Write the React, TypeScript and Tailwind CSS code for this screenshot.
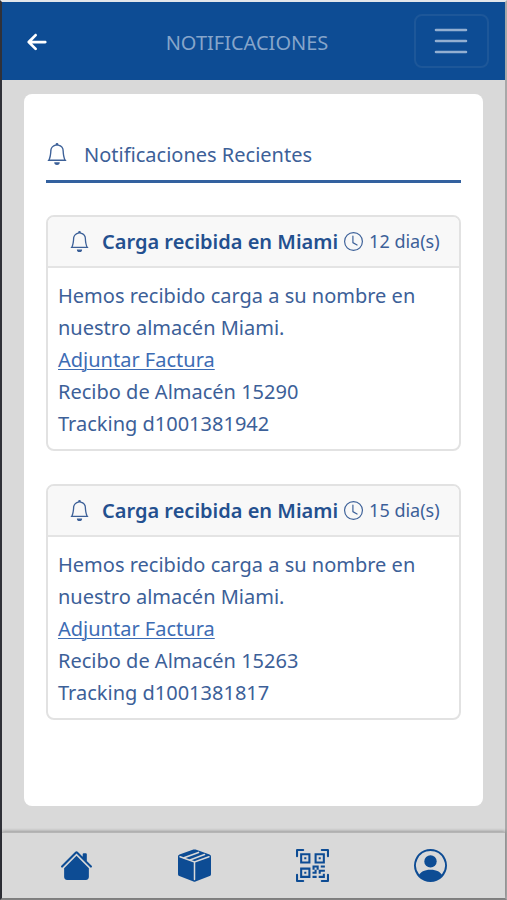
import { BsBell, BsClock, BsHouseFill, BsPersonCircle, BsQrCodeScan } from "react-icons/bs";
import { FaArrowLeft } from "react-icons/fa6";

type Notice = { id: string; age: string; receipt: string; tracking: string };

const notices: Notice[] = [
  { id: "n1", age: "12 dia(s)", receipt: "15290", tracking: "d1001381942" },
  { id: "n2", age: "15 dia(s)", receipt: "15263", tracking: "d1001381817" },
];

// Closed parcel with two bands of tape across the lid
function BoxIcon({ size }: { size: number }) {
  return (
    <svg width={size} height={size} viewBox="0 0 33 33" fill="none">
      <path
        d="M15.4.6a3 3 0 0 1 2.2 0l13.9 5A2 2 0 0 1 33 7.500v17.600a2 2 0 0 1-1.300 1.900L17.500 32.500a3 3 0 0 1-2 0L1.300 27A2 2 0 0 1 0 25.100V7.500a2 2 0 0 1 1.500-1.900z"
        fill="currentColor"
      />
      <path d="M2 7.700 16.500 13 31 7.700M16.500 13v17.500" stroke="#d9d9d9" strokeWidth="1.500" strokeLinecap="round" />
      <path d="M6 8.800 20.500 3.400M12 11 26.500 5.600" stroke="#d9d9d9" strokeWidth="1.600" strokeLinecap="round" />
    </svg>
  );
}

const tabs = [
  { label: "Inicio", Icon: BsHouseFill },
  { label: "Paquetes", Icon: BoxIcon },
  { label: "Escanear", Icon: BsQrCodeScan },
  { label: "Cuenta", Icon: BsPersonCircle },
];

function Header() {
  return (
    <header className="flex h-[78px] items-center justify-between bg-[#0d4c94] pr-4 pl-6">
      <button type="button" aria-label="Volver" className="pt-[2px] text-white">
        <FaArrowLeft size={22} />
      </button>
      <h1 className="pt-1 pl-8 text-[20px] text-[#86a5ca]">NOTIFICACIONES</h1>
      <button
        type="button"
        aria-label="Menú"
        className="flex h-[54px] w-[75px] items-center justify-center rounded-lg border-2 border-[#1d5799] text-[#93afd1]"
      >
        <svg width="34" height="26" viewBox="0 0 34 26" fill="none" stroke="currentColor" strokeWidth="2.6" strokeLinecap="round">
          <path d="M2 2h30M2 13h30M2 24h30" />
        </svg>
      </button>
    </header>
  );
}

function NoticeCard({ notice }: { notice: Notice }) {
  return (
    <article className="overflow-hidden rounded-lg border-2 border-[#e2e2e2]">
      <div className="flex h-[51px] items-center border-b-2 border-[#e4e4e4] bg-[#f8f8f8] pl-[21px] whitespace-nowrap">
        <BsBell size={21} className="shrink-0" />
        <h3 className="ml-3 text-[20px] font-semibold text-[#24508f]">Carga recibida en Miami</h3>
        <BsClock size={19} className="mr-[6px] ml-[6px] shrink-0" />
        <span className="text-[18px]">{notice.age}</span>
      </div>
      <div className="px-[10px] pt-3 pb-[9px] text-[20px] leading-8">
        <p>Hemos recibido carga a su nombre en nuestro almacén Miami.</p>
        <a href="#factura" className="text-[#3d6cb4] underline decoration-1 underline-offset-2">Adjuntar Factura</a>
        <p>Recibo de Almacén {notice.receipt}</p>
        <p>Tracking {notice.tracking}</p>
      </div>
    </article>
  );
}

export default function App() {
  return (
    <div className="flex min-h-screen flex-col border-2 border-t-[#e3e6ea] border-r-[#a8a8a8] border-b-[#858585] border-l-[#303138] bg-[#d9d9d9] font-['Noto_Sans','Open_Sans',sans-serif] text-[#3c6098]">
      <Header />
      <main className="flex grow px-[22px] pt-[14px] pb-[26px]">
        <section className="grow rounded-lg bg-white px-[22px] pt-[43px]">
          <h2 className="flex h-[46px] items-start border-b-[3px] border-[#33619f] text-[20px] leading-9">
            <BsBell size={22} className="mt-[6px] mr-4 shrink-0" />
            Notificaciones Recientes
          </h2>
          <div className="mt-8 flex flex-col gap-[33px]">
            {notices.map((n) => (
              <NoticeCard key={n.id} notice={n} />
            ))}
          </div>
        </section>
      </main>
      <nav className="grid h-[66px] grid-cols-4 border-t border-[#b5b5b5] px-4 shadow-[0_-1px_3px_rgba(0,0,0,0.3)]">
        {tabs.map(({ label, Icon }) => (
          <a key={label} href="#" aria-label={label} className="flex items-center justify-center text-[#0d4c94]">
            <Icon size={33} />
          </a>
        ))}
      </nav>
    </div>
  );
}
